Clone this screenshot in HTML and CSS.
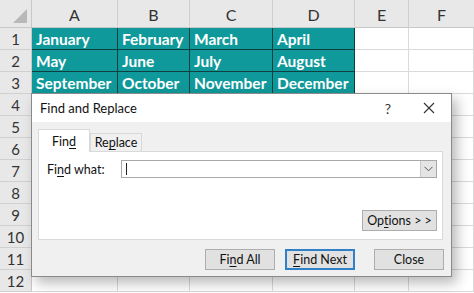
FILE: index.html
```html
<!DOCTYPE html>
<html>
<head>
<meta charset="utf-8">
<link rel="stylesheet" href="styles.css">
</head>
<body>
<div class="sheet">
  <div class="grid">
    <div class="corner"><span class="tri"></span></div>
    <div class="colh">A</div><div class="colh">B</div><div class="colh">C</div><div class="colh">D</div><div class="colh">E</div><div class="colh last">F</div>

    <div class="rowh">1</div>
    <div class="c t">January</div><div class="c t">February</div><div class="c t">March</div><div class="c t">April</div><div class="c"></div><div class="c"></div>
    <div class="rowh">2</div>
    <div class="c t">May</div><div class="c t">June</div><div class="c t">July</div><div class="c t">August</div><div class="c"></div><div class="c"></div>
    <div class="rowh">3</div>
    <div class="c t">September</div><div class="c t">October</div><div class="c t">November</div><div class="c t">December</div><div class="c"></div><div class="c"></div>
    <div class="rowh">4</div><div class="c"></div><div class="c"></div><div class="c"></div><div class="c"></div><div class="c"></div><div class="c"></div>
    <div class="rowh">5</div><div class="c"></div><div class="c"></div><div class="c"></div><div class="c"></div><div class="c"></div><div class="c"></div>
    <div class="rowh">6</div><div class="c"></div><div class="c"></div><div class="c"></div><div class="c"></div><div class="c"></div><div class="c"></div>
    <div class="rowh">7</div><div class="c"></div><div class="c"></div><div class="c"></div><div class="c"></div><div class="c"></div><div class="c"></div>
    <div class="rowh">8</div><div class="c"></div><div class="c"></div><div class="c"></div><div class="c"></div><div class="c"></div><div class="c"></div>
    <div class="rowh">9</div><div class="c"></div><div class="c"></div><div class="c"></div><div class="c"></div><div class="c"></div><div class="c"></div>
    <div class="rowh">10</div><div class="c"></div><div class="c"></div><div class="c"></div><div class="c"></div><div class="c"></div><div class="c"></div>
    <div class="rowh">11</div><div class="c"></div><div class="c"></div><div class="c"></div><div class="c"></div><div class="c"></div><div class="c"></div>
    <div class="rowh">12</div><div class="c"></div><div class="c"></div><div class="c"></div><div class="c"></div><div class="c"></div><div class="c"></div>
  </div>

  <div class="dialog">
    <div class="titlebar">
      <span class="title">Find and Replace</span>
      <span class="tbtns">
        <span class="help">?</span>
        <svg class="close-x" width="12" height="12" viewBox="0 0 12 12"><path d="M1 1 L11 11 M11 1 L1 11" stroke="#333" stroke-width="1.1" fill="none"/></svg>
      </span>
    </div>
    <div class="body">
      <div class="tabs">
        <div class="tab active">Fin<u>d</u></div>
        <div class="tab">Re<u>p</u>lace</div>
      </div>
      <div class="panel">
        <div class="findrow">
          <span class="label">Fi<u>n</u>d what:</span>
          <div class="input">
            <span class="caret"></span>
            <span class="dd"><svg width="9" height="6" viewBox="0 0 9 6"><path d="M0.5 0.8 L4.5 4.8 L8.5 0.8" stroke="#555" stroke-width="1" fill="none"/></svg></span>
          </div>
        </div>
        <div class="optrow">
          <div class="btn opt">Op<u>t</u>ions &gt; &gt;</div>
        </div>
      </div>
      <div class="btnrow">
        <div class="btn">Fi<u>n</u>d All</div>
        <div class="btn primary"><u>F</u>ind Next</div>
        <div class="btn closeb">Close</div>
      </div>
    </div>
  </div>
</div>
</body>
</html>
```
FILE: styles.css
```css
* { box-sizing: border-box; }
html, body { margin: 0; padding: 0; background: #fff; }
body { width: 474px; height: 293px; overflow: hidden; }

.sheet { position: relative; width: 474px; height: 293px; }

.grid {
  display: grid;
  grid-template-columns: 32px 86px 72px 83px 82px 54px 65px;
  grid-template-rows: 28px repeat(12, 22px);
  font-family: Lato, "Liberation Sans", sans-serif;
}

.corner {
  background: #e8e8e8;
  border-right: 1px solid #c8c8c8;
  border-bottom: 1px solid #c8c8c8;
  position: relative;
}
.tri {
  position: absolute;
  right: 4px; bottom: 4px;
  width: 0; height: 0;
  border-left: 14px solid transparent;
  border-bottom: 14px solid #b8b8b8;
}

.colh {
  background: #e8e8e8;
  border-right: 1px solid #cfcfcf;
  border-bottom: 1px solid #c8c8c8;
  display: flex; align-items: center; justify-content: center;
  font-size: 16px; color: #333;
  padding-top: 2px;
}
.colh.last { border-right: none; }

.rowh {
  background: #e8e8e8;
  border-right: 1px solid #c8c8c8;
  border-bottom: 1px solid #d0d0d0;
  display: flex; align-items: center; justify-content: center;
  font-size: 15px; color: #333;
  padding-top: 1px;
}

.c {
  border-right: 1px solid #dadada;
  border-bottom: 1px solid #dadada;
}
.c.t {
  background: #10999a;
  border-right: 1px solid #0f3f3f;
  border-bottom: 1px solid #0f3f3f;
  color: #fff;
  font-weight: bold;
  font-size: 15.5px;
  padding-left: 4px;
  padding-top: 1px;
  display: flex; align-items: center;
  white-space: nowrap;
  overflow: hidden;
}

/* dialog overlay */
.dialog {
  position: absolute;
  left: 31px; top: 93px;
  width: 421px; height: 184px;
  border: 1px solid #8a8a8a;
  background: #f0f0f0;
  box-shadow: 5px 6px 12px rgba(0,0,0,0.28);
  font-family: Lato, "Open Sans", sans-serif;
  font-size: 12.5px;
  color: #111;
  display: flex; flex-direction: column;
}
.titlebar {
  height: 28px;
  background: #fff;
  display: flex; align-items: center; justify-content: space-between;
  padding-left: 8px;
  padding-right: 16px;
  font-size: 13px;
}
.tbtns { display: flex; align-items: center; gap: 32px; }
.help { font-size: 14px; color: #333; }

.body {
  flex: 1;
  display: flex; flex-direction: column;
  padding: 7px 8px 0 6px;
}
.tabs { display: flex; align-items: flex-end; height: 22px; position: relative; z-index: 1; }
.tab {
  height: 18px;
  width: 52px;
  border: 1px solid #d9d9d9;
  border-bottom: none;
  display: flex; align-items: center; justify-content: center;
  background: #f0f0f0;
}
.tab.active {
  background: #fff;
  border-color: #d9d9d9;
  margin-bottom: -1px;
  height: 23px;
}
.panel {
  height: 89px;
  background: #fff;
  border: 1px solid #d9d9d9;
  display: flex; flex-direction: column;
  padding: 8px 5px 0 8px;
}
.findrow { display: flex; align-items: center; height: 18px; }
.label { width: 74px; }
.input {
  flex: 1;
  height: 18px;
  border: 1px solid #a8a8a8;
  background: #fff;
  display: flex; align-items: center; justify-content: space-between;
  padding-left: 4px;
}
.caret { width: 1px; height: 12px; background: #222; }
.dd {
  width: 16px; height: 16px;
  background: #e4e4e4;
  border-left: 1px solid #c8c8c8;
  display: flex; align-items: center; justify-content: center;
}
.optrow { display: flex; justify-content: flex-end; margin-top: 32px; }

.btn {
  width: 70px; height: 21px;
  background: #e1e1e1;
  border: 1px solid #adadad;
  display: flex; align-items: center; justify-content: center;
}
.btn.opt { width: 75px; }
.btn.primary { border: 2px solid #2f7fc9; }
.btnrow {
  display: flex; justify-content: flex-end;
  margin-top: 9px;
  gap: 10px;
  margin-right: -1px;
}
.btn.closeb { margin-left: 9px; }
u { text-decoration-thickness: 1px; text-underline-offset: 2px; }
```
